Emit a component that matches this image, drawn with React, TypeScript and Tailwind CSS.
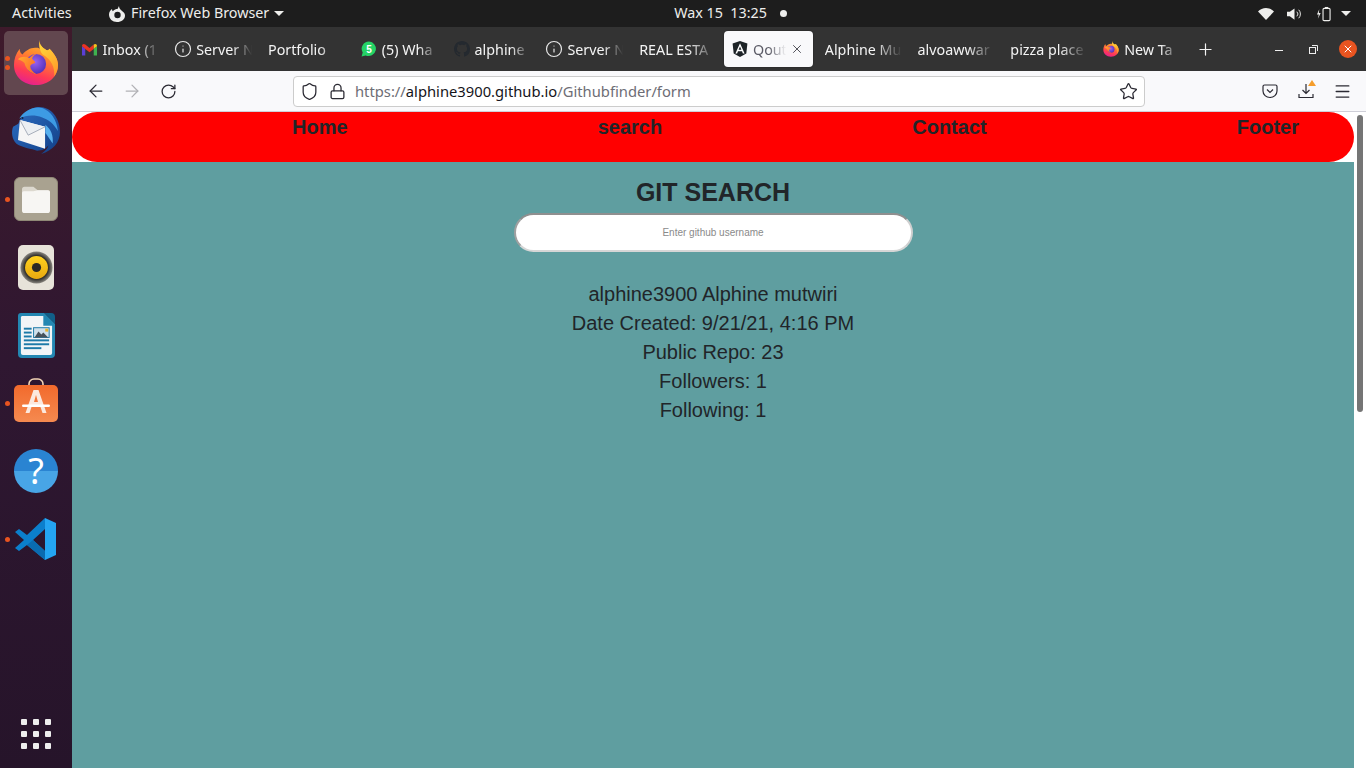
import React from "react";
import { ArrowLeft, ArrowRight, RotateCw, Shield, Lock, Star, Menu, Plus, X, Info } from "lucide-react";

const UI = "font-['Noto_Sans','Open_Sans',sans-serif]";

function FirefoxIcon({ className, id }: { className?: string; id: string }) {
  return (
    <svg viewBox="0 0 48 48" className={className}>
      <defs>
        <linearGradient id={`${id}a`} x1="0.7" y1="0" x2="0.35" y2="1">
          <stop offset="0" stopColor="#ffc02e" />
          <stop offset="0.4" stopColor="#ff8030" />
          <stop offset="0.75" stopColor="#ff3a55" />
          <stop offset="1" stopColor="#e5218f" />
        </linearGradient>
        <radialGradient id={`${id}b`} cx="0.45" cy="0.4" r="0.7">
          <stop offset="0" stopColor="#9a62f2" />
          <stop offset="1" stopColor="#4a2ab0" />
        </radialGradient>
        <linearGradient id={`${id}c`} x1="0" y1="0" x2="1" y2="0.6">
          <stop offset="0" stopColor="#ffb32e" />
          <stop offset="1" stopColor="#ff6a2a" />
        </linearGradient>
        <linearGradient id={`${id}d`} x1="0.3" y1="0" x2="0.7" y2="1">
          <stop offset="0" stopColor="#ffd83a" />
          <stop offset="1" stopColor="#ff9a2a" />
        </linearGradient>
      </defs>
      <path d="M28 0c-1 5 3 8 6 10 1 1 3 1 4-1 5 5 9 11 9 17 0 12-10 21-23 21S1 38 1 26c0-6 2-12 6-17 0 3 1 5 3 6 3-4 8-7 13-7 2 0 4 0 5 1-1-4-1-6 0-9z" fill={`url(#${id}a)`} />
      <path d="M28 0c-1 5 3 8 6 10 1 1 3 1 4-1 5 5 9 11 9 17 0 5-2 9-4 12 1-9-3-18-12-23-3-3-4-9-3-15z" fill={`url(#${id}d)`} />
      <circle cx="24" cy="25" r="10.500" fill={`url(#${id}b)`} />
      <path d="M5 20c4-3 8-3 12-1 2-2 5-5 9-5-3 1-5 2-6 5 0 2 4 3 3 5-2 1-4 1-5 3 0 3 2 6 7 9-7-1-12-6-13-12-2-2-4-3-7-4z" fill={`url(#${id}c)`} />
    </svg>
  );
}

function ThunderbirdIcon() {
  return (
    <svg viewBox="0 0 48 48" className="w-[50px] h-[50px]">
      <defs>
        <linearGradient id="tb1" x1="0" y1="0" x2="1" y2="1">
          <stop offset="0" stopColor="#2d6fc4" />
          <stop offset="1" stopColor="#123f86" />
        </linearGradient>
      </defs>
      <path d="M7 17C11 6 20 1 27 1c12 0 20 11 20 24 0 10-7 18-18 21 4-3 6-5 7-8-3 3-6 5-11 5-5-2-15-3-20-7-4-4-5-11-3-16z" fill="url(#tb1)" />
      <path d="M8 12C13 4 22 0 30 2c8 3 14 11 15 22-4-7-9-11-15-13-8-3-16-2-22 1z" fill="#3d9be4" />
      <path d="M33 18c5 4 8 10 7 18-3-4-5-8-7-10z" fill="#57b0ee" />
      <path d="M8.600 13.500L32.700 20v21L6.700 32.700z" fill="#f6f6f6" />
      <path d="M8.600 13.500L16.500 28 32.700 20" fill="#eceff2" stroke="#8b95a5" strokeWidth="0.700" />
      <circle cx="11" cy="11.500" r="1" fill="#10264a" />
    </svg>
  );
}

function FilesIcon() {
  return (
    <div className="w-11 h-11 rounded-[6px] bg-[#a9a290] border border-[#8f8876] flex items-center justify-center">
      <svg viewBox="0 0 36 32" className="w-[34px] h-[28px]">
        <path d="M2 5a3 3 0 0 1 3-3h10l5 4h11a3 3 0 0 1 3 3v3H2z" fill="#dcd8ce" />
        <path d="M2 9a2 2 0 0 1 2-2h11l5-1h12a2 2 0 0 1 2 2v21a3 3 0 0 1-3 3H5a3 3 0 0 1-3-3z" fill="#f7f6f3" />
      </svg>
    </div>
  );
}

function RhythmIcon() {
  return (
    <div className="w-[36px] h-[45px] rounded-[5px] bg-[#e7e3d9] flex items-center justify-center">
      <svg viewBox="0 0 36 36" className="w-[33px] h-[33px]">
        <defs>
          <radialGradient id="rb1">
            <stop offset="0.72" stopColor="#2a2926" />
            <stop offset="1" stopColor="#8a8780" />
          </radialGradient>
          <linearGradient id="rb2" x1="0" y1="0" x2="0" y2="1">
            <stop offset="0" stopColor="#ffd21f" />
            <stop offset="1" stopColor="#e8a910" />
          </linearGradient>
        </defs>
        <circle cx="18" cy="18" r="17.500" fill="url(#rb1)" />
        <circle cx="18" cy="18" r="12.500" fill="url(#rb2)" />
        <circle cx="18" cy="18" r="5" fill="#2a2926" />
      </svg>
    </div>
  );
}

function WriterIcon() {
  return (
    <svg viewBox="0 0 38 46" className="w-[37px] h-[45px]">
      <path d="M3 0h24l11 11v31a4 4 0 0 1-4 4H4a4 4 0 0 1-4-4V3a3 3 0 0 1 3-3z" fill="#2387b2" />
      <path d="M4 3h22v10h9v28a2 2 0 0 1-2 2H5a2 2 0 0 1-2-2V4z" fill="#f2f5f7" />
      <path d="M27 0h7a4 4 0 0 1 4 4v7z" fill="#115f88" />
      <rect x="6" y="15" width="8" height="2" fill="#1d7aa8" />
      <rect x="6" y="19" width="8" height="2" fill="#1d7aa8" />
      <rect x="6" y="23" width="8" height="2" fill="#1d7aa8" />
      <rect x="6" y="27" width="26" height="2" fill="#1d7aa8" />
      <rect x="6" y="31" width="26" height="2" fill="#1d7aa8" />
      <rect x="6" y="35" width="18" height="2" fill="#1d7aa8" />
      <rect x="16" y="15" width="16" height="10" fill="#cfe0ea" stroke="#1d7aa8" />
      <path d="M17 25l4-6 3 3 2-2 5 5z" fill="#47525a" />
      <rect x="28" y="16" width="3" height="3" fill="#e9b22c" />
    </svg>
  );
}

function StoreIcon() {
  return (
    <svg viewBox="0 0 44 44" className="w-11 h-11 -translate-y-[3px]">
      <defs>
        <linearGradient id="st1" x1="0" y1="0" x2="0" y2="1">
          <stop offset="0" stopColor="#f26a2c" />
          <stop offset="1" stopColor="#f58a50" />
        </linearGradient>
      </defs>
      <path d="M15 9V6a5 5 0 0 1 5-5h4a5 5 0 0 1 5 5v3" fill="none" stroke="#f3d5b5" strokeWidth="1.600" />
      <rect x="0" y="7" width="44" height="37" rx="5" fill="url(#st1)" />
      <path d="M19.500 12h5l8 23h-4l-2-6h-9l-2 6h-4z M20 24h4l-2-7z" fill="#fbe9df" fillRule="evenodd" />
      <rect x="8" y="26.500" width="28" height="2.500" rx="1.250" fill="#fff" />
    </svg>
  );
}

function HelpIcon() {
  return (
    <div className="w-11 h-11 rounded-full bg-[linear-gradient(#2a84d2_0%,#2a84d2_50%,#48a5e6_50%,#48a5e6_100%)] flex items-center justify-center text-white text-[36px] leading-none font-['Noto_Sans',sans-serif]">
      ?
    </div>
  );
}

function VsCodeIcon() {
  return (
    <svg viewBox="0 0 44 44" className="w-11 h-11">
      <path d="M31 1L13 18 5 12 1 15l9 8-9 8 4 3 8-6 18 15v-9L19 23 31 12z" fill="#0b7fcc" />
      <path d="M13 28l18 15v-9L19 23z" fill="#0a6bb0" />
      <path d="M31 1l11 5v32l-11 5z" fill="#24a5f2" />
    </svg>
  );
}

function GmailIcon() {
  return (
    <svg viewBox="0 0 16 13" className="w-[15px] h-[13px] shrink-0">
      <path d="M0 3v10h3.500V5.500z" fill="#5b3fd6" />
      <path d="M12.500 13H16V3l-3.500 2.500z" fill="#3fb24f" />
      <path d="M0 3c0-2.500 2-3 3.500-1.800L8 4.800l4.500-3.600L12.500 6 8 9.500 3.500 6z" fill="#ea3323" />
      <path d="M12.500 1.200C14 0 16 .5 16 3l-3.500 2.700z" fill="#f8c21c" />
    </svg>
  );
}

function WhatsappIcon() {
  return (
    <svg viewBox="0 0 16 16" className="w-4 h-4 shrink-0">
      <path d="M8 .5a7.300 7.300 0 0 0-6.300 11L.6 15.500l4.100-1A7.300 7.300 0 1 0 8 .5z" fill="#25d366" />
      <text x="8" y="11.500" fontSize="10" fontWeight="700" fill="#fff" textAnchor="middle" fontFamily="Liberation Sans, sans-serif">5</text>
    </svg>
  );
}

function GithubIcon() {
  return (
    <svg viewBox="0 0 16 16" className="w-4 h-4 shrink-0" fill="#24292f">
      <path d="M8 0C3.580 0 0 3.580 0 8c0 3.540 2.290 6.530 5.470 7.590.4.070.55-.17.55-.38 0-.19-.01-.82-.01-1.490-2.010.37-2.530-.49-2.690-.94-.09-.23-.48-.94-.82-1.130-.28-.15-.68-.52-.01-.53.63-.01 1.080.58 1.230.82.720 1.210 1.870.87 2.330.66.070-.52.280-.87.510-1.070-1.780-.2-3.640-.89-3.640-3.950 0-.87.310-1.590.820-2.150-.08-.2-.36-1.020.08-2.120 0 0 .67-.21 2.200.82.640-.18 1.320-.27 2-.27s1.360.09 2 .27c1.530-1.040 2.200-.82 2.200-.82.440 1.100.16 1.920.08 2.120.51.560.82 1.270.82 2.150 0 3.070-1.870 3.750-3.650 3.950.290.250.540.730.540 1.480 0 1.070-.01 1.930-.01 2.200 0 .210.150.460.550.380A8.010 8.010 0 0 0 16 8c0-4.420-3.580-8-8-8z" />
    </svg>
  );
}

function AngularIcon() {
  return (
    <svg viewBox="0 0 16 16" className="w-4 h-4 shrink-0">
      <path d="M8 0L.6 2.600l1.100 9.800L8 16l6.300-3.600 1.100-9.800z" fill="#1d2327" />
      <path d="M8 2.200L3.400 12.500h1.700l.9-2.300h4l.9 2.300h1.700zm1.400 6.600H6.600L8 5.400z" fill="#fff" />
    </svg>
  );
}

type TabT = { label: string; icon?: React.ReactNode; active?: boolean };

const infoIcon = <Info size={18} strokeWidth={1.600} className="shrink-0 -mx-px text-[#e8e8e8]" />;

const tabs: TabT[] = [
  { label: "Inbox (1", icon: <GmailIcon /> },
  { label: "Server N", icon: infoIcon },
  { label: "Portfolio" },
  { label: "(5) Wha", icon: <WhatsappIcon /> },
  { label: "alphine", icon: <GithubIcon /> },
  { label: "Server N", icon: infoIcon },
  { label: "REAL ESTA" },
  { label: "Qoute", icon: <AngularIcon />, active: true },
  { label: "Alphine Mu" },
  { label: "alvoawwar" },
  { label: "pizza place" },
  { label: "New Ta", icon: <FirefoxIcon id="tabff" className="w-4 h-4 shrink-0" /> },
];

function Tab({ t }: { t: TabT }) {
  if (t.active) {
    return (
      <div className="w-[92.800px] shrink-0 pr-[4px]">
        <div className="h-9 rounded-[4px] bg-[#f9f9fb] flex items-center pl-[8px] pr-[9px] gap-[5px] shadow-[0_0_2px_rgba(0,0,0,0.4)]">
          {t.icon}
          <span className="mt-[2px] min-w-0 flex-1 whitespace-nowrap overflow-hidden text-[#5b5b66] [mask-image:linear-gradient(to_right,black_45%,transparent_95%)]">{t.label}</span>
          <X size={14} strokeWidth={1.500} className="shrink-0 -ml-[3px] text-[#3b3b45]" />
        </div>
      </div>
    );
  }
  return (
    <div className="w-[92.800px] shrink-0 h-9 pl-2 pr-2 flex items-center gap-[5px] text-[#f4f4f4]">
      {t.icon}
      <span className="mt-[2px] min-w-0 flex-1 whitespace-nowrap overflow-hidden [mask-image:linear-gradient(to_right,black_65%,transparent)]">{t.label}</span>
    </div>
  );
}

function DockItem({ children, dots = 0, active }: { children: React.ReactNode; dots?: number; active?: boolean }) {
  return (
    <div className="relative h-[68px] flex items-center justify-center">
      {active && <div className="absolute left-1 top-[2px] w-16 h-16 rounded-[5px] bg-[#62474f]" />}
      <div className="relative flex items-center justify-center">{children}</div>
      {dots > 0 && (
        <div className="absolute left-[5px] top-0 bottom-0 flex flex-col justify-center gap-1">
          {Array.from({ length: dots }).map((_, i) => (
            <span key={i} className="w-[5px] h-[5px] rounded-full bg-[#e95420]" />
          ))}
        </div>
      )}
    </div>
  );
}

function TopBar() {
  return (
    <div className={`h-[27px] shrink-0 bg-[#1d1d1d] flex items-center text-[14.300px] leading-[26px] text-[#eeeeec] ${UI}`}>
      <span className="ml-3 w-[97px] -mt-px">Activities</span>
      <svg viewBox="0 0 16 16" className="w-4 h-4" fill="#eeeeec">
        <path d="M10 0c0 2 1 3 2.500 4.500C14.500 6.500 16 7 16 9.500 16 13.500 12.500 16 8 16S0 13 0 8.500C0 6 1.500 4 3 3c0 1 .3 1.700.8 2.200C5 3.500 7 3 8.500 3c.5-1 1-2 1.500-3z" />
        <circle cx="8.500" cy="9" r="3.200" fill="#1d1d1d" />
      </svg>
      <span className="ml-[6px] -mt-px">Firefox Web Browser</span>
      <span className="ml-[5px] w-0 h-0 border-x-[5px] border-x-transparent border-t-[5px] border-t-[#eeeeec]" />
      <span className="ml-[390px] -mt-px whitespace-pre">Wax 15  13:25</span>
      <span className="ml-[13px] w-[7px] h-[7px] rounded-full bg-[#eeeeec]" />
      <div className="ml-auto flex items-center mr-[15px]">
        <svg viewBox="0 0 16 14" className="w-4 h-[14px]" fill="#eeeeec">
          <path d="M8 13L0 4.500C2 2.500 5 1 8 1s6 1.500 8 3.500z" />
        </svg>
        <svg viewBox="0 0 16 14" className="ml-[13px] w-[15px] h-[14px]" fill="none" stroke="#eeeeec">
          <path d="M0 4.500h3L8 1v12L3 9.500H0z" fill="#eeeeec" stroke="none" />
          <path d="M10.500 4.500a3.500 3.500 0 0 1 0 5M12.500 2.500a6.500 6.500 0 0 1 0 9" strokeWidth="1" />
        </svg>
        <svg viewBox="0 0 16 16" className="ml-[14px] w-[15px] h-4" fill="none" stroke="#eeeeec">
          <path d="M3.500 3L1 8.500h2L2 13l3-6H3z" fill="#eeeeec" stroke="none" />
          <rect x="7.500" y="2" width="7.500" height="13" rx="1.200" strokeWidth="1.200" />
          <rect x="9.500" y="0.500" width="3.500" height="1.500" fill="#eeeeec" stroke="none" />
        </svg>
        <span className="ml-[10px] w-0 h-0 border-x-[5px] border-x-transparent border-t-[5px] border-t-[#eeeeec]" />
      </div>
    </div>
  );
}

function Dock() {
  return (
    <div className="w-[72px] shrink-0 flex flex-col pt-[2px] bg-[linear-gradient(#3e1a2b_0%,#2f1731_45%,#26142a_100%)]">
      <DockItem dots={2} active><FirefoxIcon id="dockff" className="w-[46px] h-[46px]" /></DockItem>
      <DockItem><ThunderbirdIcon /></DockItem>
      <DockItem dots={1}><FilesIcon /></DockItem>
      <DockItem><RhythmIcon /></DockItem>
      <DockItem><WriterIcon /></DockItem>
      <DockItem dots={1}><StoreIcon /></DockItem>
      <DockItem><HelpIcon /></DockItem>
      <DockItem dots={1}><VsCodeIcon /></DockItem>
      <div className="mt-auto mb-[19px] self-center grid grid-cols-3 gap-[6px]">
        {Array.from({ length: 9 }).map((_, i) => (
          <span key={i} className="w-[6px] h-[6px] rounded-[1px] bg-[#eeeeee]" />
        ))}
      </div>
    </div>
  );
}

function ToolBox({ children, className = "" }: { children: React.ReactNode; className?: string }) {
  return <div className={`w-9 h-9 shrink-0 flex items-center justify-center ${className}`}>{children}</div>;
}

function BrowserChrome() {
  return (
    <div className={`shrink-0 ${UI}`}>
      <div className="h-11 bg-[#333333] flex items-center pl-[2.400px] text-[14.300px]">
        {tabs.map((t, i) => (
          <Tab key={i} t={t} />
        ))}
        <Plus size={19} strokeWidth={1.500} className="ml-[8px] text-[#f4f4f4]" />
        <span className="ml-[60px] w-2 h-px bg-[#eeeeee] mt-[3px]" />
        <svg viewBox="0 0 9 9" className="ml-[26px] w-[9px] h-[9px]" fill="none" stroke="#eeeeee">
          <rect x="0.500" y="2.500" width="6" height="6" />
          <path d="M3 0.500h5.500v5.500" />
        </svg>
        <span className="ml-[21px] w-[18px] h-[18px] rounded-full bg-[#e95420] flex items-center justify-center">
          <X size={12} strokeWidth={2} className="text-white" />
        </span>
      </div>
      <div className="h-[41px] bg-[#f9f9fb] border-b border-[#cfcfd8] flex items-center text-[#2b2a33]">
        <ToolBox className="ml-[6px]"><ArrowLeft size={20} strokeWidth={1.500} /></ToolBox>
        <ToolBox><ArrowRight size={20} strokeWidth={1.500} className="text-[#b1b1b5]" /></ToolBox>
        <ToolBox><RotateCw size={17} strokeWidth={1.800} /></ToolBox>
        <div className="ml-[107px] w-[852px] h-[31px] rounded-[4px] border border-[#cccccc] bg-white flex items-center pr-[6px]">
          <div className="w-[30px] flex justify-center"><Shield size={19} strokeWidth={1.600} /></div>
          <div className="w-[26px] flex justify-center"><Lock size={17} strokeWidth={1.800} /></div>
          <span className="ml-[5px] text-[14.750px] whitespace-nowrap text-[#6d6d75]">
            https://<span className="text-[#15141a]">alphine3900.github.io</span>/Githubfinder/form
          </span>
          <Star size={19} strokeWidth={1.600} className="ml-auto" />
        </div>
        <ToolBox className="ml-[107px]">
          <svg viewBox="0 0 16 16" className="w-4 h-4" fill="none" stroke="#2b2a33" strokeWidth="1.200">
            <path d="M2.500 2h11A1.500 1.500 0 0 1 15 3.500V8a7 6.500 0 0 1-14 0V3.500A1.500 1.500 0 0 1 2.500 2z" />
            <path d="M5 6.500l3 3 3-3" />
          </svg>
        </ToolBox>
        <ToolBox>
          <div className="relative w-4 h-4">
            <svg viewBox="0 0 16 16" className="w-4 h-4" fill="none" stroke="#2b2a33" strokeWidth="1.200">
              <path d="M8 1v9M4.500 7L8 10.500 11.500 7M1 11v3.500h14V11" />
            </svg>
            <span className="absolute -top-[3px] -right-[2px] w-0 h-0 border-x-[4px] border-x-transparent border-b-[6px] border-b-[#f59e2c]" />
          </div>
        </ToolBox>
        <ToolBox><Menu size={19} strokeWidth={1.600} /></ToolBox>
      </div>
    </div>
  );
}

function Page() {
  const lines = ["alphine3900 Alphine mutwiri", "Date Created: 9/21/21, 4:16 PM", "Public Repo: 23", "Followers: 1", "Following: 1"];
  return (
    <div className="flex-1 min-h-0 flex bg-white font-['Liberation_Sans',Arial,sans-serif] text-[#212529]">
      <div className="w-[1282px] flex flex-col">
        <nav className="h-[50px] shrink-0 rounded-[25px] bg-[#ff0000] flex justify-between pl-[220px] pr-[55px] text-[20px] font-bold leading-[30px]">
          <span>Home</span>
          <span>search</span>
          <span>Contact</span>
          <span>Footer</span>
        </nav>
        <main className="flex-1 bg-[#5f9ea0] flex flex-col items-center pt-[15px]">
          <h1 className="text-[25px] font-bold leading-[31px]">GIT SEARCH</h1>
          <input
            placeholder="Enter github username"
            className="mt-[5px] w-[399px] h-[39px] rounded-full bg-white border-2 border-solid border-t-[#8f8f8f] border-l-[#a0a0a0] border-r-[#cfcfcf] border-b-[#d6d6d6] text-center text-[10px] outline-none placeholder:text-[#8a8a8a]"
          />
          <div className="mt-[28px] text-center text-[20px] leading-[29px]">
            {lines.map((l) => (
              <div key={l}>{l}</div>
            ))}
          </div>
        </main>
      </div>
      <div className="flex-1 pl-[3px] pt-[3px]">
        <div className="w-[6px] h-[297px] rounded-full bg-[#757575]" />
      </div>
    </div>
  );
}

export default function App() {
  return (
    <div className="w-[1366px] h-[768px] overflow-hidden flex flex-col">
      <TopBar />
      <div className="flex-1 min-h-0 flex">
        <Dock />
        <div className="flex-1 min-w-0 flex flex-col">
          <BrowserChrome />
          <Page />
        </div>
      </div>
    </div>
  );
}
